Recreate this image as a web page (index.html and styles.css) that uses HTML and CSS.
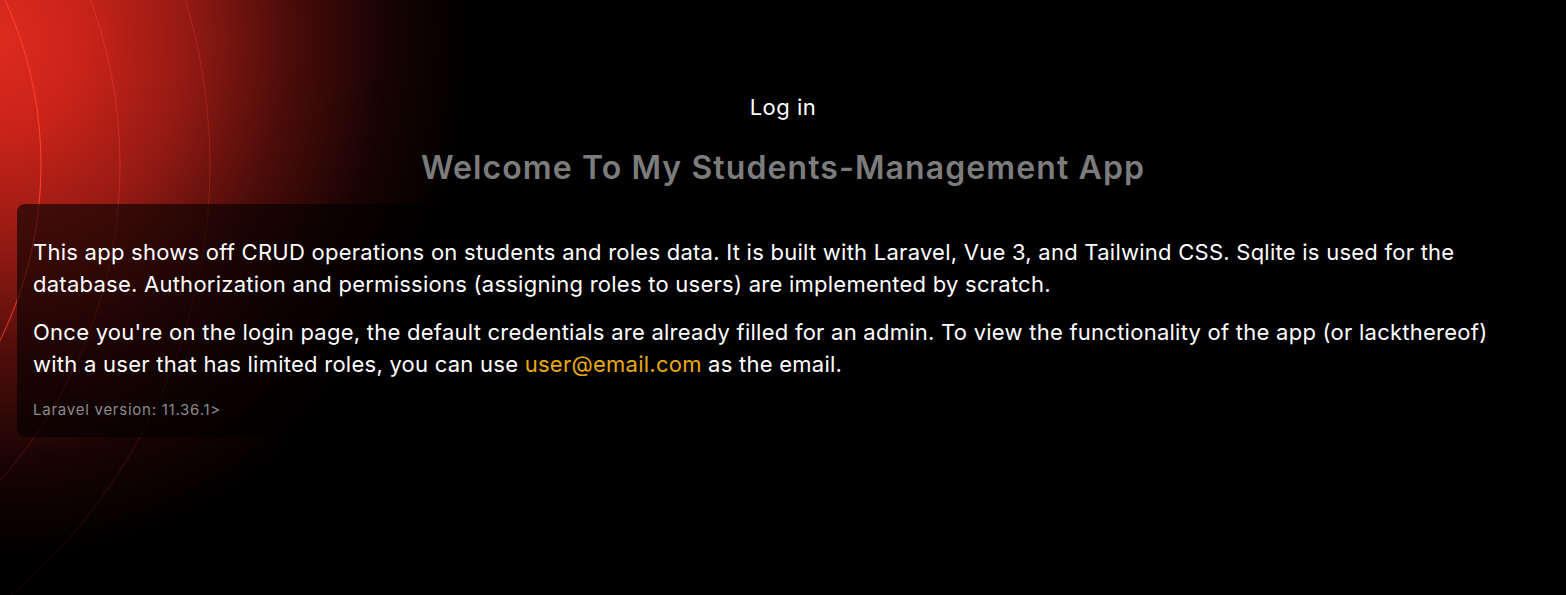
FILE: index.html
```html
<!DOCTYPE html>
<html lang="en">
<head>
<meta charset="utf-8">
<title>Students-Management App</title>
<link rel="stylesheet" href="styles.css">
</head>
<body>
<div class="backdrop" aria-hidden="true">
  <svg class="arcs" width="700" height="595" viewBox="0 0 700 595">
    <defs>
      <linearGradient id="fadeA" gradientUnits="userSpaceOnUse" x1="0" y1="0" x2="0" y2="600">
        <stop offset="0" stop-color="#ff3b2b" stop-opacity="1"/>
        <stop offset="0.45" stop-color="#ff3b2b" stop-opacity="0.85"/>
        <stop offset="0.8" stop-color="#ff3b2b" stop-opacity="0.25"/>
        <stop offset="1" stop-color="#ff3b2b" stop-opacity="0"/>
      </linearGradient>
      <linearGradient id="fadeB" gradientUnits="userSpaceOnUse" x1="0" y1="0" x2="0" y2="600">
        <stop offset="0" stop-color="#ff3b2b" stop-opacity="0.5"/>
        <stop offset="0.5" stop-color="#ff3b2b" stop-opacity="0.4"/>
        <stop offset="0.85" stop-color="#ff3b2b" stop-opacity="0.15"/>
        <stop offset="1" stop-color="#ff3b2b" stop-opacity="0"/>
      </linearGradient>
      <linearGradient id="fadeC" gradientUnits="userSpaceOnUse" x1="0" y1="0" x2="0" y2="650">
        <stop offset="0" stop-color="#ff3b2b" stop-opacity="0.3"/>
        <stop offset="0.6" stop-color="#ff3b2b" stop-opacity="0.22"/>
        <stop offset="1" stop-color="#ff3b2b" stop-opacity="0.06"/>
      </linearGradient>
    </defs>
    <circle cx="-355" cy="165" r="396" fill="none" stroke="url(#fadeA)" stroke-width="1.2"/>
    <circle cx="-355" cy="165" r="475" fill="none" stroke="url(#fadeB)" stroke-width="1"/>
    <circle cx="-355" cy="165" r="565" fill="none" stroke="url(#fadeC)" stroke-width="1"/>
  </svg>
</div>

<div class="page">
  <header class="top">
    <a class="login" href="#">Log in</a>
  </header>

  <h1 class="title">Welcome To My Students-Management App</h1>

  <main class="card">
    <p class="para">This app shows off CRUD operations on students and roles data. It is built with Laravel, Vue 3, and Tailwind CSS. Sqlite is used for the database. Authorization and permissions (assigning roles to users) are implemented by scratch.</p>
    <p class="para">Once you're on the login page, the default credentials are already filled for an admin. To view the functionality of the app (or lackthereof) with a user that has limited roles, you can use <span class="email">user@email.com</span> as the email.</p>
    <div class="version">Laravel version: 11.36.1&gt;</div>
  </main>
</div>
</body>
</html>
```

FILE: styles.css
```css
html, body {
  margin: 0;
  padding: 0;
}

html {
  height: 595px;
  overflow: hidden;
  background: #000;
}

body {
  background: #000;
  color: #fff;
  font-family: Inter, "Noto Sans", "Liberation Sans", sans-serif;
  height: 595px;
  position: relative;
  overflow: hidden;
}

.backdrop {
  position: absolute;
  left: 0;
  top: 0;
  width: 700px;
  height: 595px;
  background: radial-gradient(ellipse 470px 520px at 0 40px,
    #de2b20 0%,
    #c92319 18%,
    #931a13 40%,
    #4a0c09 62%,
    #180303 82%,
    #000 100%);
  pointer-events: none;
}

.arcs {
  display: block;
}

.page {
  position: relative;
  z-index: 1;
  padding: 0 17px;
}

.top {
  display: flex;
  justify-content: center;
  padding-top: 93px;
}

.login {
  color: #fff;
  text-decoration: none;
  font-size: 22px;
  line-height: 28px;
  letter-spacing: 0.5px;
}

.title {
  margin: 29px 0 18px;
  text-align: center;
  font-size: 32px;
  line-height: 36px;
  font-weight: 600;
  letter-spacing: 1.1px;
  color: #7c7c7c;
}

.card {
  display: block;
  padding: 16px 16px 17px;
  border-radius: 8px;
  background: rgba(0, 0, 0, 0.6);
}

.para {
  margin: 16px 0 0;
  font-size: 22px;
  line-height: 32px;
  letter-spacing: 0.25px;
}

.email {
  color: #eaaa0c;
}

.version {
  margin-top: 20px;
  font-size: 15px;
  line-height: 20px;
  letter-spacing: 0.75px;
  color: #8a8a8a;
}
```
